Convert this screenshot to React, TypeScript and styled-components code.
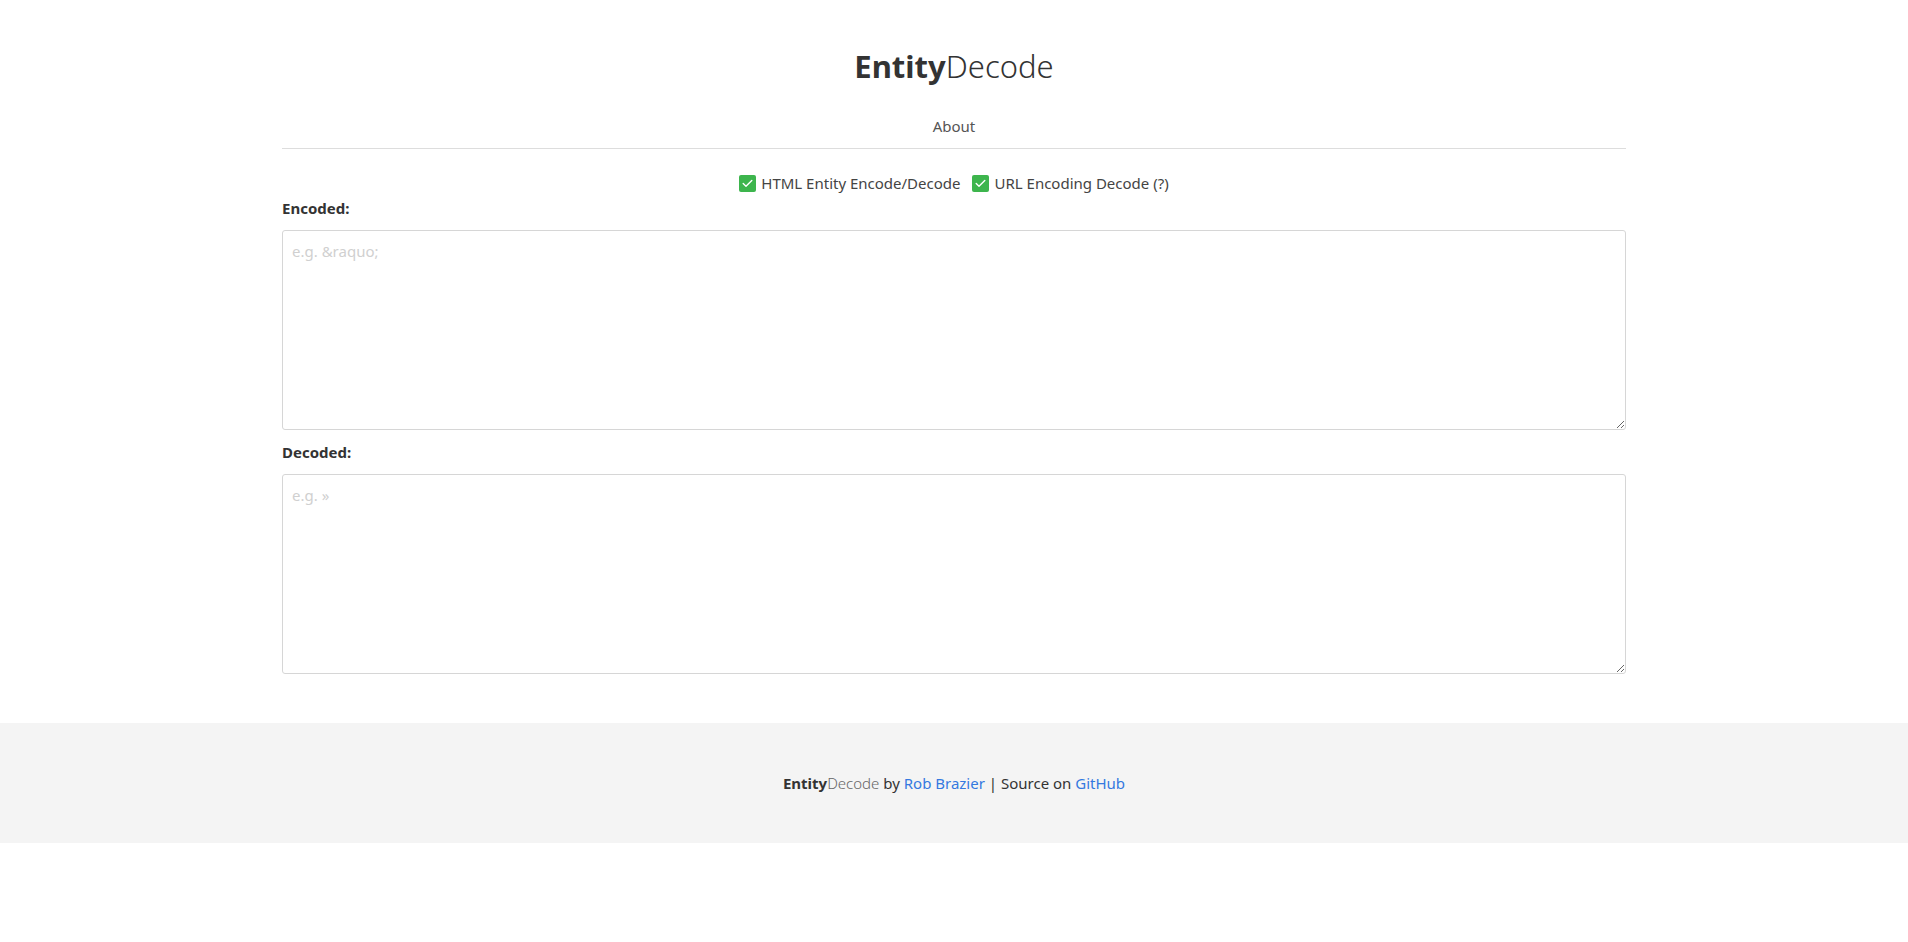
import React from "react";
import styled, { createGlobalStyle } from "styled-components";

const Global = createGlobalStyle`
  html, body { margin: 0; padding: 0; background: #fff; }
  body {
    font-family: "Noto Sans", "Open Sans", "DejaVu Sans", sans-serif;
    color: #333;
    font-size: 15px;
  }
  * { box-sizing: border-box; }
`;

const Container = styled.div`
  width: 1344px;
  margin: 0 auto;
`;

const Header = styled.header`
  text-align: center;
  padding-top: 48px;
`;

const Title = styled.h1`
  margin: 0;
  font-size: 31px;
  line-height: 36px;
  font-weight: 300;
  color: #333;
`;

const Strong = styled.span`
  font-weight: 700;
`;

const Nav = styled.nav`
  margin-top: 31px;
  padding-bottom: 11px;
  border-bottom: 1px solid #ddd;
  display: flex;
  justify-content: center;
`;

const NavLink = styled.a`
  color: #555;
  font-size: 15px;
  line-height: 22px;
  text-decoration: none;
`;

const Options = styled.div`
  display: flex;
  justify-content: center;
  gap: 12px;
  margin-top: 24px;
`;

const Option = styled.label`
  display: flex;
  align-items: center;
  gap: 5px;
  font-size: 15px;
  line-height: 20px;
  color: #444;
  cursor: pointer;
`;

const Box = styled.span`
  width: 17px;
  height: 17px;
  border-radius: 2px;
  background: #3db54d;
  display: inline-flex;
  align-items: center;
  justify-content: center;
`;

const Field = styled.div`
  display: flex;
  flex-direction: column;
`;

const Label = styled.label<{ $top: number }>`
  margin-top: ${(p) => p.$top}px;
  font-weight: 700;
  font-size: 15px;
  line-height: 20px;
  color: #333;
  margin-bottom: 12px;
`;

const Area = styled.textarea`
  width: 100%;
  height: 200px;
  border: 1px solid #d6d6d6;
  border-radius: 3px;
  padding: 10px 9px;
  font-family: inherit;
  font-size: 15px;
  color: #333;
  resize: vertical;
  outline: none;
  &::placeholder { color: #d0d0d0; }
`;

const Footer = styled.footer`
  margin-top: 49px;
  height: 120px;
  background: #f4f4f4;
  display: flex;
  align-items: center;
  justify-content: center;
  font-size: 15px;
  color: #333;
`;

const Light = styled.span`
  font-weight: 300;
  color: #666;
`;

const Link = styled.a`
  color: #3479e0;
  text-decoration: none;
`;

const Check = () => (
  <svg width="11" height="9" viewBox="0 0 11 9" fill="none">
    <path d="M1.2 4.6 L4 7.3 L9.8 1.6" stroke="#fff" strokeWidth="1.4" strokeLinecap="round" strokeLinejoin="round" />
  </svg>
);

export default function App() {
  return (
    <>
      <Global />
      <Container>
        <Header>
          <Title>
            <Strong>Entity</Strong>Decode
          </Title>
          <Nav>
            <NavLink href="#">About</NavLink>
          </Nav>
        </Header>
        <Options>
          <Option>
            <Box><Check /></Box>
            HTML Entity Encode/Decode
          </Option>
          <Option>
            <Box><Check /></Box>
            URL Encoding Decode (?)
          </Option>
        </Options>
        <Field>
          <Label $top={5}>Encoded:</Label>
          <Area placeholder={"e.g. &raquo;"} />
        </Field>
        <Field>
          <Label $top={12}>Decoded:</Label>
          <Area placeholder={"e.g. \u00bb"} />
        </Field>
      </Container>
      <Footer>
        <span>
          <Strong>Entity</Strong><Light>Decode</Light> by <Link href="#">Rob Brazier</Link> | Source on <Link href="#">GitHub</Link>
        </span>
      </Footer>
    </>
  );
}
